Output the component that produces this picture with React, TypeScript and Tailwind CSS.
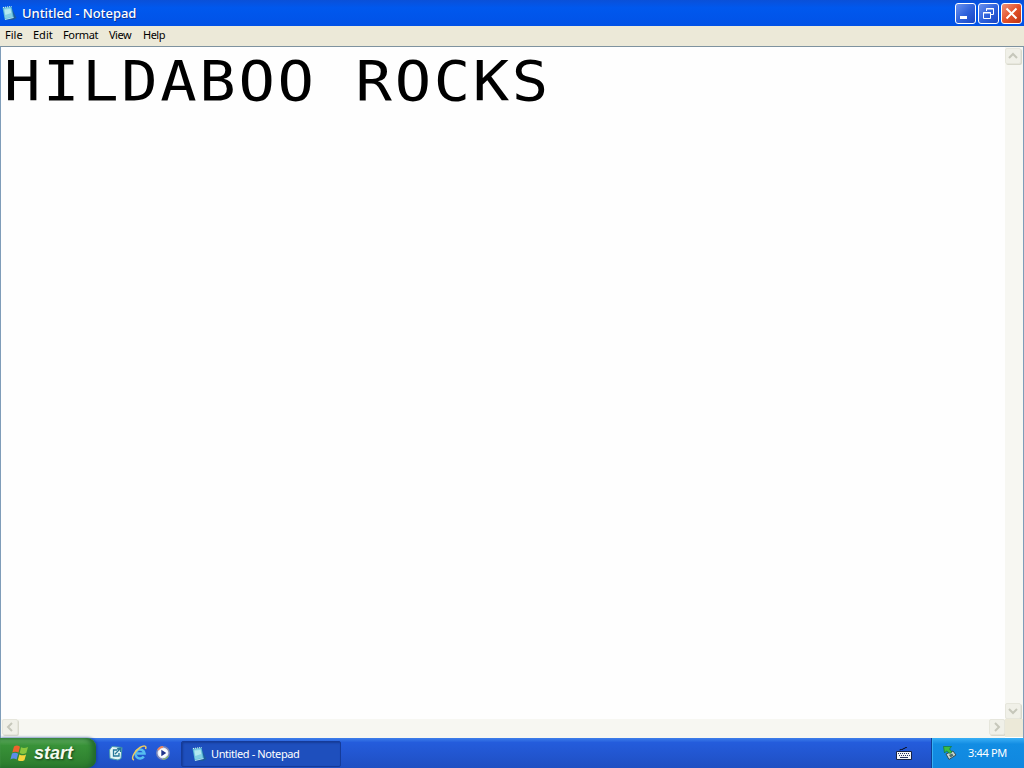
import type { ReactNode } from 'react'

const MENU_ITEMS = [
  { label: 'File', className: 'w-[28px]' },
  { label: 'Edit', className: 'w-[30px]' },
  { label: 'Format', className: 'w-[46px] tracking-[-0.35px]' },
  { label: 'View', className: 'w-[34px] tracking-[-0.5px]' },
  { label: 'Help', className: 'w-[34px] tracking-[-0.5px]' },
]

const NotepadIcon = ({ className }: { className?: string }) => (
  <svg className={className} viewBox="0 0 16 16" fill="none">
    <path d="m11 4 4.500 9-3.500 2-8-.500Z" fill="#1d5b9c" />
    <path d="M1.500 2.500 10.500 1.500l2.300 11-9 2.300Z" fill="#4fb0d0" />
    <path d="M2.500 3.500 10 2.500l1.700 9.500-7.700 1.500Z" fill="#83cfe4" />
    <path d="M3.500 4.500 9.500 4l.7 4L4.300 10Z" fill="#b3e9f0" />
    <path d="M2 2.500 10.500 1.500" stroke="#e4f7f5" strokeDasharray="1 1" />
    <path d="M4 14.500 12.500 12.500" stroke="#d1f3fa" strokeWidth=".8" />
  </svg>
)

const CaptionButton = ({ close, children }: { close?: boolean; children: ReactNode }) => (
  <button
    className={
      close
        ? 'flex h-[21px] w-[21px] items-center justify-center rounded-[3px] border border-white bg-linear-to-br from-[#ee9277] via-[#e4512a] to-[#bd3514]'
        : 'flex h-[21px] w-[21px] items-center justify-center rounded-[3px] border border-white bg-linear-to-br from-[#6b91ee] via-[#3063dc] to-[#1945c4]'
    }
  >
    {children}
  </button>
)

const ScrollButton = ({ d }: { d: string }) => (
  <div className="flex h-[16px] w-[16px] shrink-0 items-center justify-center rounded-[2px] border border-[#e6e6dc] bg-[#f0f0e8] shadow-[1px_1px_0_#d8d8cc]">
    <svg className="h-[10px] w-[10px]" viewBox="0 0 10 10" fill="none">
      <path d={d} stroke="#c6c7bb" strokeWidth="2" />
    </svg>
  </div>
)

const TitleBar = () => (
  <div className="flex h-[26px] shrink-0 items-center bg-linear-to-b from-[#0a50d8] via-[#0058ee] via-30% to-[#0152e6] pl-px pr-[2px]">
    <NotepadIcon className="h-[16px] w-[16px]" />
    <span className="ml-[5px] flex-1 whitespace-nowrap font-['Noto_Sans','Open_Sans',sans-serif] text-[13px] font-medium leading-[26px] tracking-[-0.05px] text-white [text-shadow:1px_1px_#0b3494]">
      Untitled - Notepad
    </span>
    <div className="flex gap-[2px]">
      <CaptionButton>
        <svg className="h-[19px] w-[19px]" viewBox="0 0 19 19">
          <path d="M4 12h7v3H4z" fill="#fff" />
        </svg>
      </CaptionButton>
      <CaptionButton>
        <svg className="h-[19px] w-[19px]" viewBox="0 0 19 19" fill="none" stroke="#fff">
          <path d="M7.500 7V4.500h7v6H12M7 5h8" />
          <path d="M4.500 8.500h7v6h-7zM4 9h8" />
        </svg>
      </CaptionButton>
      <CaptionButton close>
        <svg className="h-[19px] w-[19px]" viewBox="0 0 19 19">
          <path d="m4.500 4.500 10 10m0-10-10 10" stroke="#fff" strokeWidth="2" />
        </svg>
      </CaptionButton>
    </div>
  </div>
)

const StartButton = () => (
  <div className="flex h-full w-[96px] shrink-0 items-center rounded-r-[9px] bg-linear-to-b from-[#63ad64] via-[#389238] via-25% to-[#2c7b2d] pl-[10px] shadow-[inset_-4px_0_5px_#22692c,inset_0_2px_2px_#4b9d4d,1px_0_3px_#15409c]">
    <svg className="h-[19px] w-[20px]" viewBox="0 0 20 19">
      <path d="M4 2.500q3-2 6 .2L8.500 8.600Q5.500 6.800 2.300 8.500Z" fill="#ee632d" />
      <path d="M11 3.300q3 1.700 7-.3l-1.700 6q-3.500 1.800-6.600 0Z" fill="#8ac63e" />
      <path d="M2 9.600q3-1.600 6.200.2l-1.600 5.700q-3-1.800-6.200-.1Z" fill="#5c8de8" />
      <path d="M9.400 10.400q3.200 1.700 6.700 0l-1.700 5.800q-3.300 1.700-6.600 0Z" fill="#f5d43c" />
    </svg>
    <span className="ml-[4px] font-['Liberation_Sans',sans-serif] text-[18px] font-bold italic leading-[28px] text-[#f5fbef] [text-shadow:1px_1px_2px_#173f18]">
      start
    </span>
  </div>
)

const QuickLaunch = () => (
  <div className="ml-[12px] flex w-[73px] shrink-0 items-center gap-[7px]">
    <svg className="h-[16px] w-[16px]" viewBox="0 0 16 16" fill="none">
      <path d="m4 1.500 10 1-1 11-3 1.500-8-1.500L1.500 5Z" fill="#e4f6f7" stroke="#4a9cae" />
      <path d="M9 5H5.500v6H11V8M7 9l6-6M9 4l4-1-.5 4" stroke="#257798" strokeWidth="1.300" />
    </svg>
    <svg className="h-[17px] w-[17px]" viewBox="0 0 17 17" fill="none">
      <path d="M12.800 11.500a4.500 4.500 0 1 1 .7-3H6" stroke="#55bdf0" strokeWidth="2.500" />
      <path d="M3 15C-1 14 4 5.500 9 2.500c4-2.400 7-1.800 5.500 1.500" stroke="#edca62" strokeWidth="1.500" />
    </svg>
    <svg className="h-[16px] w-[16px]" viewBox="0 0 16 16" fill="none">
      <circle cx="8" cy="8" r="6.200" fill="#e9effb" stroke="#7b86b7" strokeWidth="1.500" />
      <path d="M3 5a6 6 0 0 1 5-3.200" stroke="#ed855b" strokeWidth="1.700" />
      <path d="M13 11a6 6 0 0 1-5 3.200" stroke="#85b477" strokeWidth="1.500" />
      <circle cx="8" cy="8" r="4" fill="#fff" />
      <path d="m6.300 4.700 5 3.300-5 3.300Z" fill="#20348c" />
    </svg>
  </div>
)

const Taskbar = () => (
  <div className="flex h-[30px] shrink-0 bg-linear-to-b from-[#3e7eea] via-[#245cdc] via-15% to-[#1f4fc2] font-['Noto_Sans',sans-serif] text-[11px] text-white">
    <StartButton />
    <QuickLaunch />
    <div className="mt-[3px] flex h-[26px] w-[160px] items-center rounded-[2px] border border-[#153b99] bg-[#1e4fbd] pl-[9px] shadow-[inset_1px_1px_2px_#163c97]">
      <NotepadIcon className="h-[16px] w-[16px]" />
      <span className="ml-[4px] whitespace-nowrap tracking-[-0.4px]">Untitled - Notepad</span>
    </div>
    <div className="ml-auto flex items-center pr-[19px]">
      <svg className="mt-[2px] h-[14px] w-[16px]" viewBox="0 0 16 14" fill="none">
        <path d="M4 3.500V2.500h3V1.500h2V.500h2" stroke="#101d42" />
        <path d="M.5 4.500h15v8H.5z" fill="#f3f4f6" stroke="#152246" />
        <path d="M2 6.500h12M3 8.500h11" stroke="#26345e" strokeDasharray="1 1" />
        <path d="M4 10.500h8" stroke="#26345e" />
      </svg>
    </div>
    <div className="flex w-[93px] shrink-0 items-center border-l border-[#103f93] bg-linear-to-b from-[#37aff5] via-[#128de3] via-20% to-[#1087df] pl-[10px] shadow-[inset_1px_0_#37b1f3]">
      <svg className="h-[16px] w-[16px]" viewBox="0 0 16 16" fill="none">
        <path d="m4 9 7-3 3 4-7 4.500Z" fill="#c9d6cc" stroke="#324f5c" />
        <path d="m7 10 3-1.500 1.500 2-3 2Z" fill="#4f706d" />
        <path d="M1.500 1.500H9.500L7.500 4l2.500 3-2 1.500L4.500 6l-2 2Z" fill="#3bbd42" stroke="#197636" strokeWidth=".7" />
      </svg>
      <span className="ml-[10px] whitespace-nowrap tracking-[-0.35px]">3:44 PM</span>
    </div>
  </div>
)

export default function App() {
  return (
    <div className="flex h-[768px] w-[1024px] flex-col overflow-hidden bg-white">
      <TitleBar />
      <nav className="flex h-[20px] shrink-0 bg-[#ece9d8] pl-[5px] font-['Noto_Sans',sans-serif] text-[11px] leading-[18px] text-black">
        {MENU_ITEMS.map((item) => (
          <span key={item.label} className={item.className}>
            {item.label}
          </span>
        ))}
      </nav>
      <main className="flex h-[692px] shrink-0 flex-col border-l border-r border-t border-[#7f9db9] border-t-[#7e929f] bg-[#fefefe]">
        <div className="flex flex-1">
          <div className="flex-1 overflow-hidden pl-[3px] pt-[2px]">
            <div className="origin-top-left scale-x-[1.1] whitespace-pre font-['DejaVu_Sans_Mono',monospace] text-[55px] leading-[64px] tracking-[2.4px] text-black">
              HILDABOO ROCKS
            </div>
          </div>
          <div className="flex w-[18px] flex-col justify-between bg-[#f7f7f2] pt-px">
            <ScrollButton d="m1 7 4-4 4 4" />
            <ScrollButton d="m1 3 4 4 4-4" />
          </div>
        </div>
        <div className="flex h-[19px] shrink-0">
          <div className="flex flex-1 justify-between bg-[#f7f7f2] pl-px">
            <ScrollButton d="M7 1 3 5l4 4" />
            <ScrollButton d="m3 1 4 4-4 4" />
          </div>
          <div className="w-[18px] border-b border-white bg-[#ece9d8]" />
        </div>
      </main>
      <Taskbar />
    </div>
  )
}
